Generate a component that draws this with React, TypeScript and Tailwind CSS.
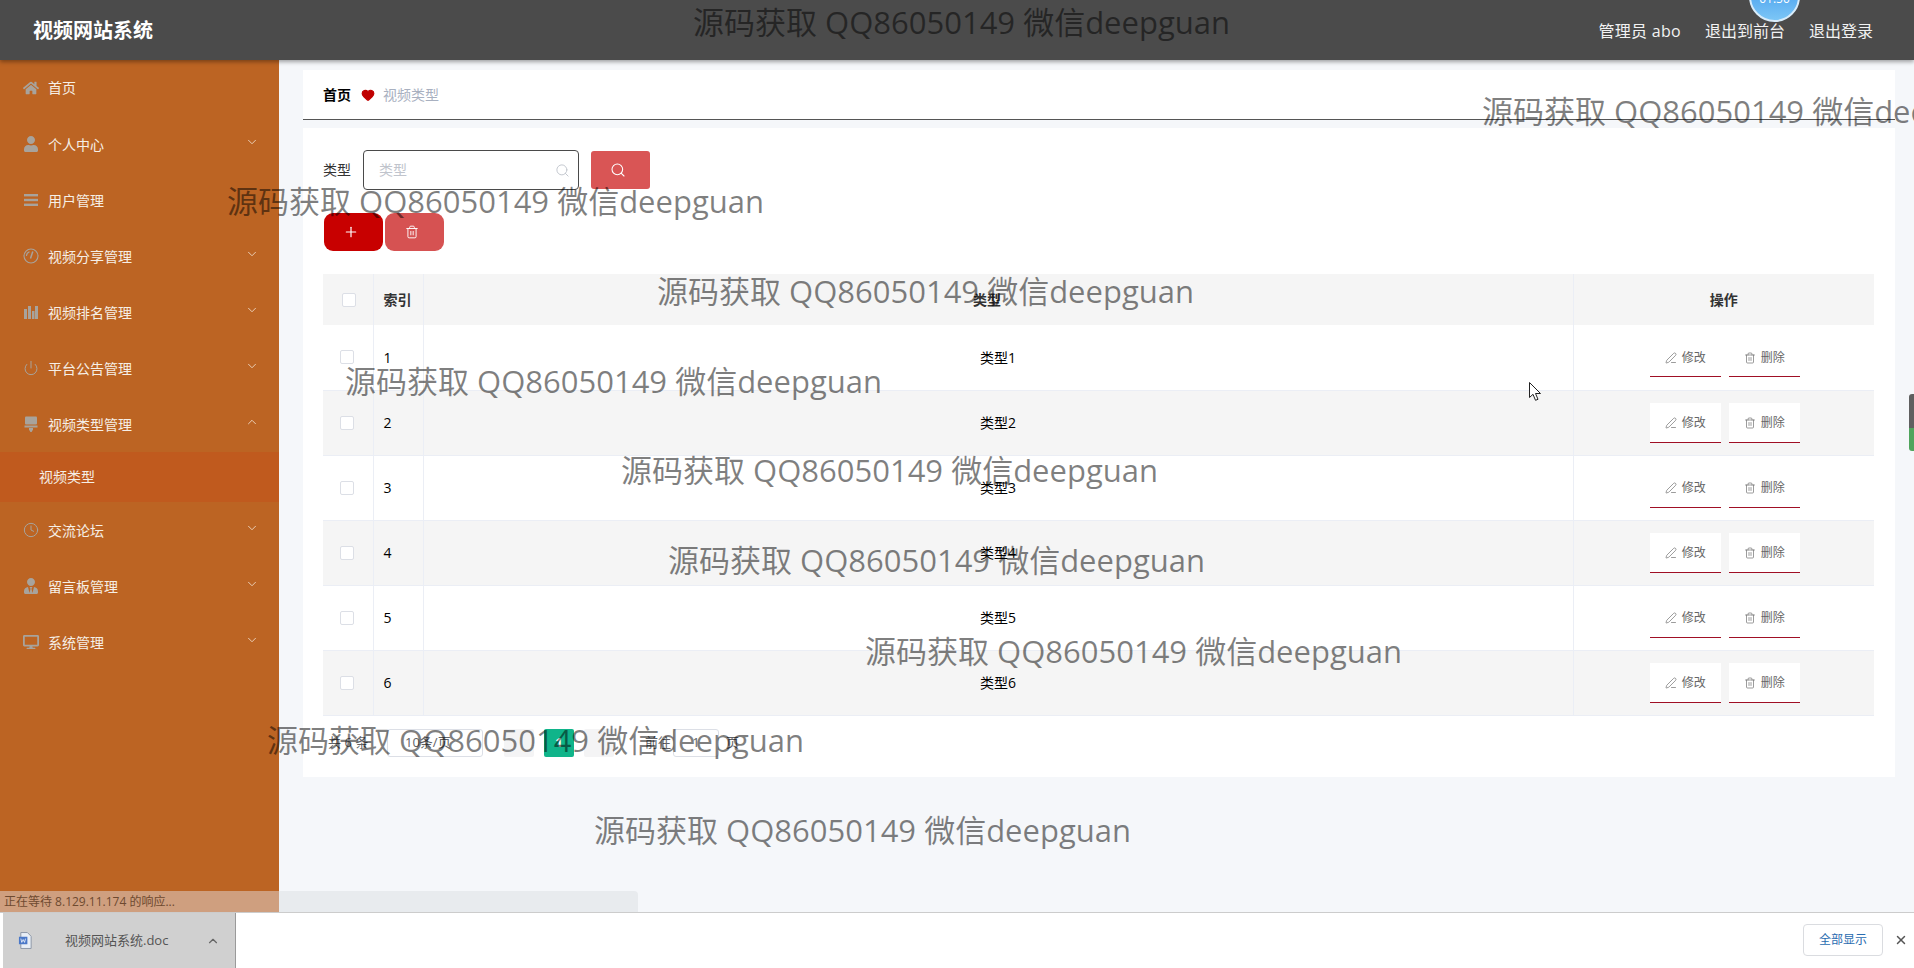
import React from 'react';
import { ChevronDown, ChevronUp, Power, Clock, Heart, Search, Plus, Trash2, PenLine, X } from 'lucide-react';
import { FaHome, FaUser, FaUserTie, FaDesktop } from 'react-icons/fa';

const iconClass = 'w-4 h-4 text-[#a8a39c]';

function ListIcon() {
  return (
    <svg viewBox="0 0 16 16" className={iconClass} fill="currentColor">
      <rect x="1" y="2" width="14" height="2.4" />
      <rect x="1" y="6.800" width="14" height="2.4" />
      <rect x="1" y="11.600" width="14" height="2.4" />
    </svg>
  );
}

function GaugeIcon() {
  return (
    <svg viewBox="0 0 16 16" className={iconClass} fill="none" stroke="currentColor" strokeWidth="1.1">
      <circle cx="8" cy="8" r="7" />
      <path d="M9.800 3.500 7.500 10.500" strokeWidth="1.5" />
      <path d="M3.500 8a4.500 4.500 0 0 1 3-4.200" />
    </svg>
  );
}

function BarsIcon() {
  return (
    <svg viewBox="0 0 16 16" className={iconClass} fill="currentColor">
      <rect x="1" y="5" width="3" height="10" />
      <rect x="5" y="2" width="3" height="13" />
      <rect x="9" y="7" width="2.5" height="8" />
      <rect x="12" y="2" width="3" height="13" />
    </svg>
  );
}

function StampIcon() {
  return (
    <svg viewBox="0 0 16 16" className={iconClass} fill="currentColor">
      <rect x="2" y="0.5" width="12" height="8" rx="1" />
      <rect x="1.5" y="9.5" width="13" height="2" />
      <path d="M6 12h4v1.500L8.600 16H7.400L6 13.500z" />
    </svg>
  );
}

const menu = [
  { label: '首页', icon: <FaHome className={iconClass} /> },
  { label: '个人中心', icon: <FaUser className={iconClass} />, arrow: true },
  { label: '用户管理', icon: <ListIcon /> },
  { label: '视频分享管理', icon: <GaugeIcon />, arrow: true },
  { label: '视频排名管理', icon: <BarsIcon />, arrow: true },
  { label: '平台公告管理', icon: <Power className={iconClass} strokeWidth={1.5} />, arrow: true },
  { label: '视频类型管理', icon: <StampIcon />, arrow: true, open: true },
  { label: '交流论坛', icon: <Clock className={iconClass} strokeWidth={1.5} />, arrow: true },
  { label: '留言板管理', icon: <FaUserTie className={iconClass} />, arrow: true },
  { label: '系统管理', icon: <FaDesktop className={iconClass} />, arrow: true },
];

const rows = [1, 2, 3, 4, 5, 6];

const marks = [
  'left-[693px] top-[2px]',
  'left-[1482px] top-[91px]',
  'left-[227px] top-[181px]',
  'left-[657px] top-[271px]',
  'left-[345px] top-[361px]',
  'left-[621px] top-[450px]',
  'left-[668px] top-[540px]',
  'left-[865px] top-[631px]',
  'left-[267px] top-[720px]',
  'left-[594px] top-[810px]',
];

function Sidebar() {
  return (
    <aside className="w-[279px] shrink-0 bg-[#bc6423] text-[14px] text-[#f6efe6]">
      {menu.map((item, i) => (
        <React.Fragment key={item.label}>
          <div className="h-[56px] flex items-center pl-[23px] pr-[20px]">
            <span className="w-[25px] shrink-0 flex">{item.icon}</span>
            <span className={i === 0 ? 'flex-1 mb-[2px]' : 'flex-1'}>{item.label}</span>
            {item.arrow && (item.open
              ? <ChevronUp className="w-[14px] h-[14px] mb-1 text-[#f0dcc8]" strokeWidth={1.5} />
              : <ChevronDown className="w-[14px] h-[14px] mb-1 text-[#f0dcc8]" strokeWidth={1.5} />)}
          </div>
          {item.open && (
            <div className="h-[50px] pb-[2px] flex items-center pl-[39px] bg-[#c05a1e]">视频类型</div>
          )}
        </React.Fragment>
      ))}
    </aside>
  );
}

function ActionButton({ icon, label }: { icon: React.ReactNode; label: string }) {
  return (
    <button className="w-[71px] h-[40px] pt-[2px] bg-white border-b border-[#a00f25] flex items-center justify-center gap-[5px] text-[12px] text-[#666666]">
      {icon}
      {label}
    </button>
  );
}

function DataTable() {
  return (
    <table className="w-full table-fixed border-collapse text-[14px] text-black">
      <colgroup>
        <col className="w-[50px]" />
        <col className="w-[50px]" />
        <col />
        <col className="w-[301px]" />
      </colgroup>
      <thead>
        <tr className="h-[51px] bg-[#f5f5f5] font-bold text-[#333333]">
          <th className="border-r border-[#ebeef5] pl-[19px] text-left">
            <span className="block w-[14px] h-[14px] bg-white border border-[#dcdfe6] rounded-[2px]" />
          </th>
          <th className="border-r border-[#ebeef5] pl-[10px] text-left">索引</th>
          <th className="border-r border-[#ebeef5] pr-[22px]">类型</th>
          <th>操作</th>
        </tr>
      </thead>
      <tbody>
        {rows.map((n) => (
          <tr key={n} className={n % 2 === 0 ? 'h-[65px] bg-[#f5f5f5] border-b border-[#ebeef5]' : 'h-[65px] bg-white border-b border-[#ebeef5]'}>
            <td className="border-r border-[#ebeef5] pl-[17px]">
              <span className="block w-[14px] h-[14px] bg-white border border-[#dcdfe6] rounded-[2px]" />
            </td>
            <td className="border-r border-[#ebeef5] pl-[10px]">{n}</td>
            <td className="border-r border-[#ebeef5] text-center">类型{n}</td>
            <td>
              <div className="flex justify-center gap-[8px] pl-[2px]">
                <ActionButton icon={<PenLine className="w-3 h-3" strokeWidth={1.3} />} label="修改" />
                <ActionButton icon={<Trash2 className="w-3 h-3" strokeWidth={1.3} />} label="删除" />
              </div>
            </td>
          </tr>
        ))}
      </tbody>
    </table>
  );
}

function Pagination() {
  return (
    <div className="mt-[13px] h-[28px] flex items-center text-[13px] text-[#606266]">
      <span className="ml-[5px] w-[59px]">共 6 条</span>
      <span className="w-[96px] h-[28px] border border-[#dcdfe6] rounded-[3px] flex items-center pl-[17px]">10条/页</span>
      <span className="ml-[21px] w-[30px] h-[28px] bg-[#f4f4f5] rounded-[2px]" />
      <span className="ml-[10px] w-[30px] h-[28px] bg-[#10b48a] rounded-[2px] flex items-center justify-center text-white font-bold">1</span>
      <span className="ml-[10px] w-[30px] h-[28px] bg-[#f4f4f5] rounded-[2px]" />
      <span className="ml-[31px] w-[28px]">前往</span>
      <span className="w-[46px] h-[28px] border border-[#dcdfe6] rounded-[3px] flex items-center justify-center">1</span>
      <span className="ml-[7px]">页</span>
    </div>
  );
}

function DownloadBar() {
  return (
    <div className="h-[56px] shrink-0 bg-white border-t border-[#cccccc] flex items-stretch relative">
      <div className="ml-[3px] w-[233px] bg-[#d0d0d0] border-r border-[#9a9a9a] flex items-center text-[13px] text-[#555555]">
        <svg viewBox="0 0 16 18" className="ml-[15px] w-[15px] h-[17px]">
          <path d="M3 .5h7l4 4v13H3z" fill="#e8eef6" stroke="#8a94a4" />
          <rect x="1" y="5" width="9" height="8" fill="#4a78c8" />
          <path d="M3 7l1 4 1.500-3 1.500 3 1-4" fill="none" stroke="#ffffff" strokeWidth=".8" />
        </svg>
        <span className="ml-[32px] w-[141px]">视频网站系统.doc</span>
        <ChevronUp className="w-[14px] h-[14px] text-[#666666]" strokeWidth={2} />
      </div>
      <button className="absolute left-[1803px] top-[11px] w-[80px] h-[32px] border border-[#dadce0] rounded-[4px] text-[12px] text-[#2a6cb0]">全部显示</button>
      <X className="absolute left-[1894px] top-[20px] w-[14px] h-[14px] text-[#555555]" strokeWidth={2.5} />
    </div>
  );
}

export default function App() {
  return (
    <div className="relative h-[968px] w-[1914px] overflow-hidden flex flex-col bg-[#f5f7fa] font-['Open_Sans','Noto_Sans_CJK_SC',sans-serif]">
      <header className="h-[60px] shrink-0 bg-[#4b4b4b] shadow-[0_2px_4px_rgba(0,0,0,0.35)] relative z-10 flex items-center pl-[33px] pr-[41px] text-white">
        <h1 className="text-[20px] font-bold flex-1 mt-[2px]">视频网站系统</h1>
        <div className="flex gap-[24px] text-[16px] text-[#f2f2f2] mt-[2px]">
          <span className="tracking-[0.3px]">管理员 abo</span>
          <span>退出到前台</span>
          <span>退出登录</span>
        </div>
        {/* clock bubble cut off by the top edge */}
        <div className="absolute left-[1749px] top-[-29px] w-[51px] h-[51px] rounded-full bg-gradient-to-b from-[#2f8fe8] to-[#7cc6f6] border-2 border-[#d8ecfa] flex items-end justify-center pb-[14px] text-[12px] text-white leading-[14px]">01:50</div>
      </header>

      <div className="flex flex-1 min-h-0">
        <Sidebar />
        <main className="flex-1 min-w-0 pt-[10px] pl-[24px] pr-[19px]">
          <div className="h-[50px] bg-white border-b border-[#555555] flex items-center pl-[20px] text-[14px]">
            <span className="font-bold text-black">首页</span>
            <Heart className="ml-[10px] w-[14px] h-[14px] text-[#c00000]" fill="#c00000" />
            <span className="ml-[8px] text-[#a8b0c0]">视频类型</span>
          </div>

          <section className="mt-[8px] bg-white pt-[22px] pb-[20px] pl-[20px] pr-[21px]">
            <div className="h-[40px] flex items-center text-[14px]">
              <span className="w-[40px] mb-[1px] text-[#333333]">类型</span>
              <div className="w-[216px] h-[40px] border border-[#4a4a4a] rounded-[4px] flex items-center pl-[15px] pr-[8px] text-[#c0c4cc]">
                <span className="flex-1 mb-[1px]">类型</span>
                <Search className="w-[15px] h-[15px]" strokeWidth={1.5} />
              </div>
              <button className="ml-[12px] w-[59px] h-[38px] pr-[5px] bg-[#d95555] rounded-[3px] flex items-center justify-center text-white">
                <Search className="w-[16px] h-[16px]" strokeWidth={1.6} />
              </button>
            </div>

            <div className="mt-[23px] h-[38px] flex gap-[2px] pl-[1px]">
              <button className="w-[59px] h-[38px] pr-[6px] bg-[#c80000] rounded-[9px] flex items-center justify-center text-white">
                <Plus className="w-[16px] h-[16px]" strokeWidth={1.8} />
              </button>
              <button className="w-[59px] h-[38px] pr-[6px] bg-[#d65252] rounded-[9px] flex items-center justify-center text-white">
                <Trash2 className="w-[14px] h-[14px]" strokeWidth={1.6} />
              </button>
            </div>

            <div className="mt-[23px]">
              <DataTable />
            </div>
            <Pagination />
          </section>
        </main>
      </div>

      <DownloadBar />

      {/* browser status bubble, sits over the page */}
      <div className="absolute left-0 top-[891px] w-[638px] h-[21px] bg-[#e8ebee] rounded-tr-[4px]" />
      <div className="absolute left-0 top-[891px] w-[279px] h-[21px] bg-[#cf9f7f] pl-[4px] text-[12px] leading-[21px] text-[#6e4a30]">正在等待 8.129.11.174 的响应...</div>

      {/* side handle at the right edge */}
      <div className="absolute left-[1909px] top-[394px] w-[5px] h-[57px] rounded-l-[3px] bg-gradient-to-b from-[#5f5f5f] from-60% to-[#4fa45c] to-60%" />

      {/* mouse pointer */}
      <svg viewBox="0 0 12 19" className="absolute left-[1529px] top-[382px] w-[12px] h-[19px]">
        <path d="M.5.500v15l3.500-3.200 2.500 6 2.500-1-2.500-5.800h5z" fill="#ffffff" stroke="#222222" strokeWidth="1" />
      </svg>

      {marks.map((pos) => (
        <div key={pos} className={`absolute ${pos} h-[40px] leading-[40px] whitespace-nowrap text-[31px] text-black/50 pointer-events-none z-20`}>
          源码获取 QQ86050149 微信deepguan
        </div>
      ))}
    </div>
  );
}
